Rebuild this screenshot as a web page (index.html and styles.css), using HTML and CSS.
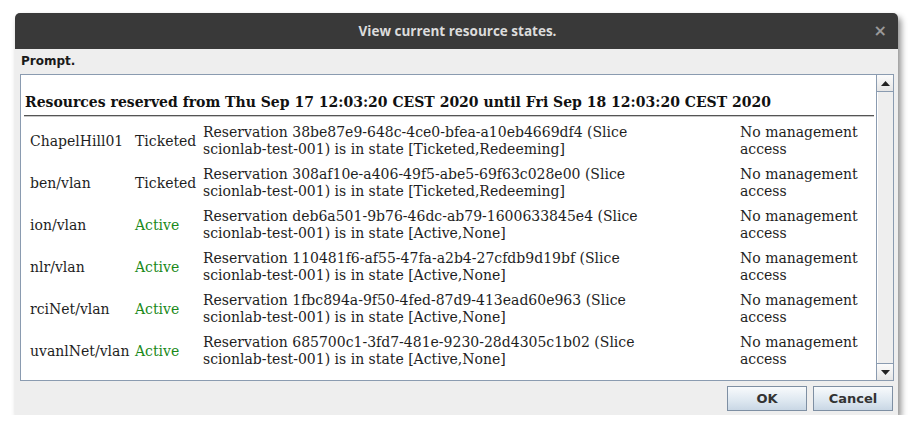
FILE: index.html
```html
<!DOCTYPE html>
<html>
<head>
<meta charset="utf-8">
<link rel="stylesheet" href="styles.css">
</head>
<body>
<div class="dialog">
  <div class="titlebar">
    <span class="title">View current resource states.</span>
    <span class="close">×</span>
  </div>
  <div class="content">
    <div class="prompt">Prompt.</div>
    <div class="scrollpane">
      <div class="viewport">
        <div class="heading">Resources reserved from Thu Sep 17 12:03:20 CEST 2020 until Fri Sep 18 12:03:20 CEST 2020</div>
        <div class="rule"></div>
        <div class="rows">
          <div class="row">
            <div class="c name">ChapelHill01</div>
            <div class="c status">Ticketed</div>
            <div class="c res">Reservation 38be87e9-648c-4ce0-bfea-a10eb4669df4 (Slice scionlab-test-001) is in state [Ticketed,Redeeming]</div>
            <div class="c access">No management access</div>
          </div>
          <div class="row">
            <div class="c name">ben/vlan</div>
            <div class="c status">Ticketed</div>
            <div class="c res">Reservation 308af10e-a406-49f5-abe5-69f63c028e00 (Slice scionlab-test-001) is in state [Ticketed,Redeeming]</div>
            <div class="c access">No management access</div>
          </div>
          <div class="row">
            <div class="c name">ion/vlan</div>
            <div class="c status active">Active</div>
            <div class="c res">Reservation deb6a501-9b76-46dc-ab79-1600633845e4 (Slice scionlab-test-001) is in state [Active,None]</div>
            <div class="c access">No management access</div>
          </div>
          <div class="row">
            <div class="c name">nlr/vlan</div>
            <div class="c status active">Active</div>
            <div class="c res">Reservation 110481f6-af55-47fa-a2b4-27cfdb9d19bf (Slice scionlab-test-001) is in state [Active,None]</div>
            <div class="c access">No management access</div>
          </div>
          <div class="row">
            <div class="c name">rciNet/vlan</div>
            <div class="c status active">Active</div>
            <div class="c res">Reservation 1fbc894a-9f50-4fed-87d9-413ead60e963 (Slice scionlab-test-001) is in state [Active,None]</div>
            <div class="c access">No management access</div>
          </div>
          <div class="row">
            <div class="c name">uvanlNet/vlan</div>
            <div class="c status active">Active</div>
            <div class="c res">Reservation 685700c1-3fd7-481e-9230-28d4305c1b02 (Slice scionlab-test-001) is in state [Active,None]</div>
            <div class="c access">No management access</div>
          </div>
        </div>
      </div>
      <div class="scrollbar">
        <div class="sbtn"><svg width="9" height="5" viewBox="0 0 9 5"><polygon points="0,5 9,5 4.5,0" fill="#222"/></svg></div>
        <div class="track"></div>
        <div class="sbtn"><svg width="9" height="5" viewBox="0 0 9 5"><polygon points="0,0 9,0 4.5,5" fill="#222"/></svg></div>
      </div>
    </div>
    <div class="buttons">
      <button class="btn">OK</button>
      <button class="btn">Cancel</button>
    </div>
  </div>
</div>
</body>
</html>
```

FILE: styles.css
```css
html, body {
  margin: 0;
  padding: 0;
  background: #ffffff;
}
body {
  padding: 13px 0 0 15px;
}
.dialog {
  width: 883px;
  height: 402px;
  display: flex;
  flex-direction: column;
  border-radius: 5px 5px 0 0;
  box-shadow: 3px 4px 6px rgba(0,0,0,0.45);
  overflow: hidden;
  background: #eeeeee;
}
.titlebar {
  height: 36px;
  flex: none;
  background: #393939;
  display: flex;
  align-items: center;
  justify-content: center;
  position: relative;
}
.title {
  font-family: "Open Sans", sans-serif;
  font-weight: 700;
  font-size: 13.5px;
  color: #dcdcdc;
  padding-left: 2px;
}
.close {
  position: absolute;
  right: 11px;
  top: 8px;
  font-family: "DejaVu Sans", sans-serif;
  font-weight: bold;
  font-size: 16px;
  color: #9a9a9a;
}
.content {
  flex: 1;
  display: flex;
  flex-direction: column;
  padding: 0 4px 0 5px;
}
.prompt {
  font-family: "DejaVu Sans", sans-serif;
  font-weight: bold;
  font-size: 12px;
  color: #1a1a1a;
  height: 25px;
  line-height: 24px;
  padding-left: 1px;
}
.scrollpane {
  height: 305px;
  border: 1px solid #8a9bb0;
  background: #ffffff;
  display: flex;
}
.viewport {
  flex: 1;
  padding: 0 2px 0 3px;
  overflow: hidden;
}
.heading {
  font-family: "DejaVu Serif", serif;
  font-weight: bold;
  font-size: 14px;
  color: #111;
  padding: 18px 0 0 1px;
  line-height: 19px;
  white-space: nowrap;
}
.rule {
  height: 1px;
  background: #555555;
  border-bottom: 1px solid #c8c8c8;
  margin-top: 3px;
}
.rows {
  padding-top: 3px;
}
.row {
  display: grid;
  grid-template-columns: 111px 68px 537px 1fr;
  height: 42px;
  align-items: center;
  font-family: "DejaVu Serif", serif;
  font-size: 14px;
  line-height: 17px;
  color: #1e1e1e;
}
.name {
  padding-left: 6px;
}
.res {
  width: 455px;
}
.access {
  width: 130px;
}
.active {
  color: #1a8a1a;
}
.scrollbar {
  width: 16px;
  flex: none;
  display: flex;
  flex-direction: column;
  border-left: 1px solid #8a9bb0;
  background: #eeeeee;
}
.sbtn {
  height: 16px;
  flex: none;
  display: flex;
  align-items: center;
  justify-content: center;
  background: linear-gradient(#fbfbfb, #e6e6e6);
}
.sbtn:first-child {
  border-bottom: 1px solid #8a9bb0;
}
.sbtn:last-child {
  border-top: 1px solid #8a9bb0;
}
.track {
  flex: 1;
  background: #eeeeee;
  border-left: 1px solid #ffffff;
}
.buttons {
  display: flex;
  justify-content: flex-end;
  gap: 6px;
  padding-top: 5px;
  padding-right: 1px;
}
.btn {
  width: 80px;
  height: 25px;
  border: 1px solid #7e8fa3;
  border-radius: 0;
  background: linear-gradient(#f8fafc, #dde7f0 60%, #c9d7e5);
  font-family: "DejaVu Sans", sans-serif;
  font-weight: bold;
  font-size: 13px;
  color: #333333;
  padding: 0;
  margin: 0;
}
```
